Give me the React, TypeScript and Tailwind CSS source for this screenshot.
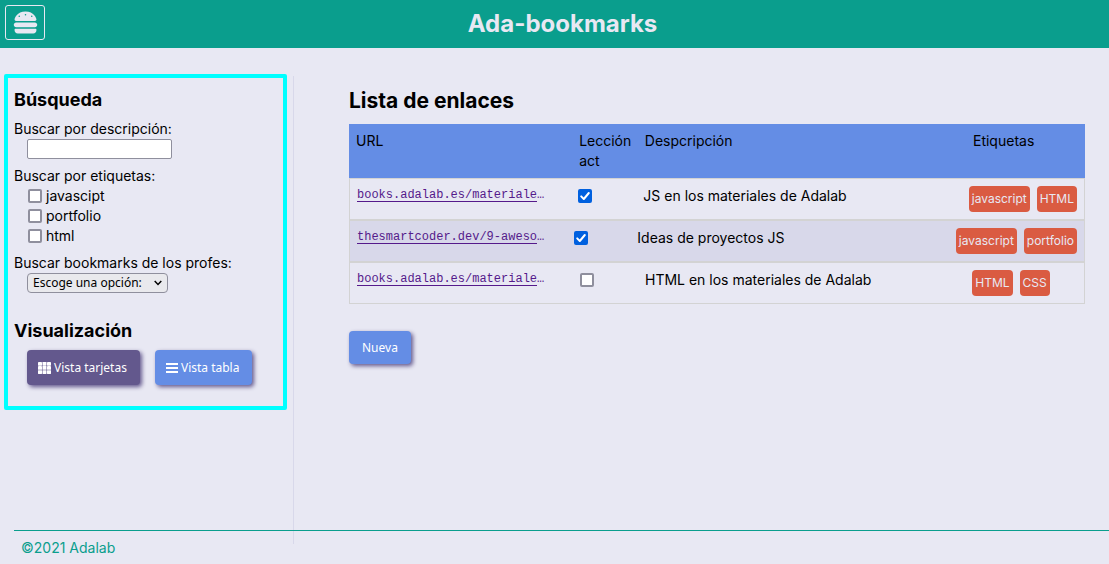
import { useState } from "react";
import { FaBurger } from "react-icons/fa6";

type Bookmark = { url: string; read: boolean; description: string; tags: string[] };

const bookmarks: Bookmark[] = [
  { url: "books.adalab.es/materiale", read: true, description: "JS en los materiales de Adalab", tags: ["javascript", "HTML"] },
  { url: "thesmartcoder.dev/9-aweso", read: true, description: "Ideas de proyectos JS", tags: ["javascript", "portfolio"] },
  { url: "books.adalab.es/materiale", read: false, description: "HTML en los materiales de Adalab", tags: ["HTML", "CSS"] },
];

const filters = ["javascipt", "portfolio", "html"];

function Checkbox({ id, label, initial = false }: { id: string; label?: string; initial?: boolean }) {
  const [checked, setChecked] = useState(initial);
  return (
    <span className="grid h-[14px] w-[14px] shrink-0 grid-cols-1 grid-rows-1">
      <input
        id={id}
        type="checkbox"
        aria-label={label}
        checked={checked}
        onChange={() => setChecked(!checked)}
        className="col-start-1 row-start-1 h-[14px] w-[14px] appearance-none rounded-[2px] border-2 border-[#8f8f9d] bg-white checked:border-[#0060df] checked:bg-[#0060df]"
      />
      {checked && (
        <svg viewBox="0 0 14 14" className="pointer-events-none col-start-1 row-start-1 h-[14px] w-[14px]" fill="none" stroke="white" strokeWidth="2" strokeLinecap="round" strokeLinejoin="round">
          <path d="M3.2 7.4 5.8 10 10.8 4" />
        </svg>
      )}
    </span>
  );
}

function GridIcon() {
  return (
    <svg viewBox="0 0 13 12" className="h-3 w-[13px]" fill="currentColor">
      {[0, 4.5, 9].map((x) =>
        [0, 4.1, 8.2].map((y) => <rect key={`${x}-${y}`} x={x} y={y} width="4" height="3.7" rx="0.4" />)
      )}
    </svg>
  );
}

function BarsIcon() {
  return (
    <svg viewBox="0 0 12 10" className="h-[10px] w-3" fill="currentColor">
      <path d="M0 0h12v2H0zM0 4h12v2H0zM0 8h12v2H0z" />
    </svg>
  );
}

const buttonBase =
  "flex items-center rounded-[4px] font-['Noto_Sans',sans-serif] text-[12px] text-white shadow-[2px_2px_4px_#63588d]";

function Sidebar() {
  return (
    <aside className="w-[294px] shrink-0 border-r border-[#d8d8ea] pr-[6px] pl-1">
      <form className="-mt-[2px] rounded-[2px] border-4 border-[#00ffff] px-[6px] pt-[10px] pb-[21px]">
        <h2 className="text-[18px] leading-6 font-bold">Búsqueda</h2>
        <div className="mt-[7px]">
          <label htmlFor="description" className="block">Buscar por descripción:</label>
          <input id="description" type="text" className="ml-[13px] block h-5 w-[145px] rounded-[2px] border border-[#8f8f9d] bg-white px-1 text-[12px]" />
        </div>
        <fieldset className="mt-[7px]">
          <legend>Buscar por etiquetas:</legend>
          {filters.map((name) => (
            <div key={name} className="ml-[14px] flex items-center gap-1">
              <Checkbox id={name} />
              <label htmlFor={name}>{name}</label>
            </div>
          ))}
        </fieldset>
        <div className="mt-[7px]">
          <label htmlFor="teacher" className="block">Buscar bookmarks de los profes:</label>
          <div className="ml-[13px] grid w-[141px] items-center">
            <select id="teacher" className="col-start-1 row-start-1 h-5 appearance-none rounded-[4px] border border-[#8f8f9d] bg-[#e9e9ed] pl-[5px] font-['Noto_Sans',sans-serif] text-[12px] leading-4">
              <option>Escoge una opción:</option>
            </select>
            <svg viewBox="0 0 8 6" className="pointer-events-none col-start-1 row-start-1 mr-[6px] h-[6px] w-2 justify-self-end" fill="none" stroke="black" strokeWidth="1.5">
              <path d="M.7 1 4 4.5 7.3 1" />
            </svg>
          </div>
        </div>
        <h2 className="mt-[26px] text-[18px] leading-6 font-bold">Visualización</h2>
        <div className="mt-[7px] ml-[13px] flex gap-[15px]">
          <button type="button" className={`${buttonBase} h-[35px] gap-[3px] bg-[#63588d] pr-[13px] pl-[11px]`}>
            <GridIcon />
            Vista tarjetas
          </button>
          <button type="button" className={`${buttonBase} h-[35px] gap-[3px] bg-[#648de5] pr-[13px] pl-[11px]`}>
            <BarsIcon />
            Vista tabla
          </button>
        </div>
      </form>
    </aside>
  );
}

function LinksTable() {
  return (
    <table className="mt-[11px] block w-full text-left">
      <thead className="block">
        <tr className="flex bg-[#648de5] p-[7px]">
          <th className="min-w-0 flex-[34_1_0%] font-normal">URL</th>
          <th className="min-w-0 flex-[10_1_0%] font-normal">Lección act</th>
          <th className="min-w-0 flex-[50_1_0%] font-normal">Despcripción</th>
          <th className="flex-[16_1_0%] font-normal">Etiquetas</th>
        </tr>
      </thead>
      <tbody className="block">
        {bookmarks.map((b, i) => (
          <tr key={i} className="flex border border-[#d3d3d3] p-[7px] even:bg-[#d8d8ea]">
            <td className="flex min-w-0 flex-[34_1_0%] items-start overflow-hidden pt-1 font-['Liberation_Mono',monospace] text-[12px] leading-[11px] text-[#551a8b]">
              <a href={`https://${b.url}`} className="border-b border-[#551a8b]">{b.url}</a>
              <span>…</span>
            </td>
            <td className="flex h-5 min-w-0 flex-[10_1_0%] items-center">
              <Checkbox id={`read-${i}`} label={`Lección act: ${b.description}`} initial={b.read} />
            </td>
            <td className="min-w-0 flex-[50_1_0%]">{b.description}</td>
            <td className="flex flex-[16_1_0%] gap-[7px]">
              {b.tags.map((tag) => (
                <span key={tag} className="h-[26px] rounded-[4px] bg-[#da5b42] px-[3px] text-[12px] leading-[26px] text-[#e8e8f3]">{tag}</span>
              ))}
            </td>
          </tr>
        ))}
      </tbody>
    </table>
  );
}

export default function App() {
  return (
    <div className="flex min-h-screen flex-col bg-[#e8e8f3] font-[Inter,sans-serif] text-[14px] leading-5 text-black">
      <header className="grid h-12 grid-cols-[1fr_auto_1fr] bg-[#0a9e8d] px-[5px] text-[#e8e8f3]">
        <button type="button" aria-label="Menú" className="mt-[5px] flex h-[35px] w-10 items-center justify-center rounded-[3px] border border-[#e8e8f3]">
          <FaBurger size={25} />
        </button>
        <h1 className="self-center pl-4 text-[24px] leading-8 font-bold">Ada-bookmarks</h1>
      </header>
      <div className="flex flex-1 pt-7">
        <Sidebar />
        <main className="min-w-0 flex-1 pt-[13px] pr-6 pl-[55px]">
          <h2 className="text-[21px] leading-6 font-bold">Lista de enlaces</h2>
          <LinksTable />
          <button type="button" className={`${buttonBase} mt-[27px] h-[33px] bg-[#648de5] px-[13px]`}>Nueva</button>
        </main>
      </div>
      <footer className="-mt-[14px] ml-[14px] border-t border-[#0a9e8d] px-[7px] pt-[7px] pb-[6px] text-[#0a9e8d]">
        ©2021 Adalab
      </footer>
    </div>
  );
}
